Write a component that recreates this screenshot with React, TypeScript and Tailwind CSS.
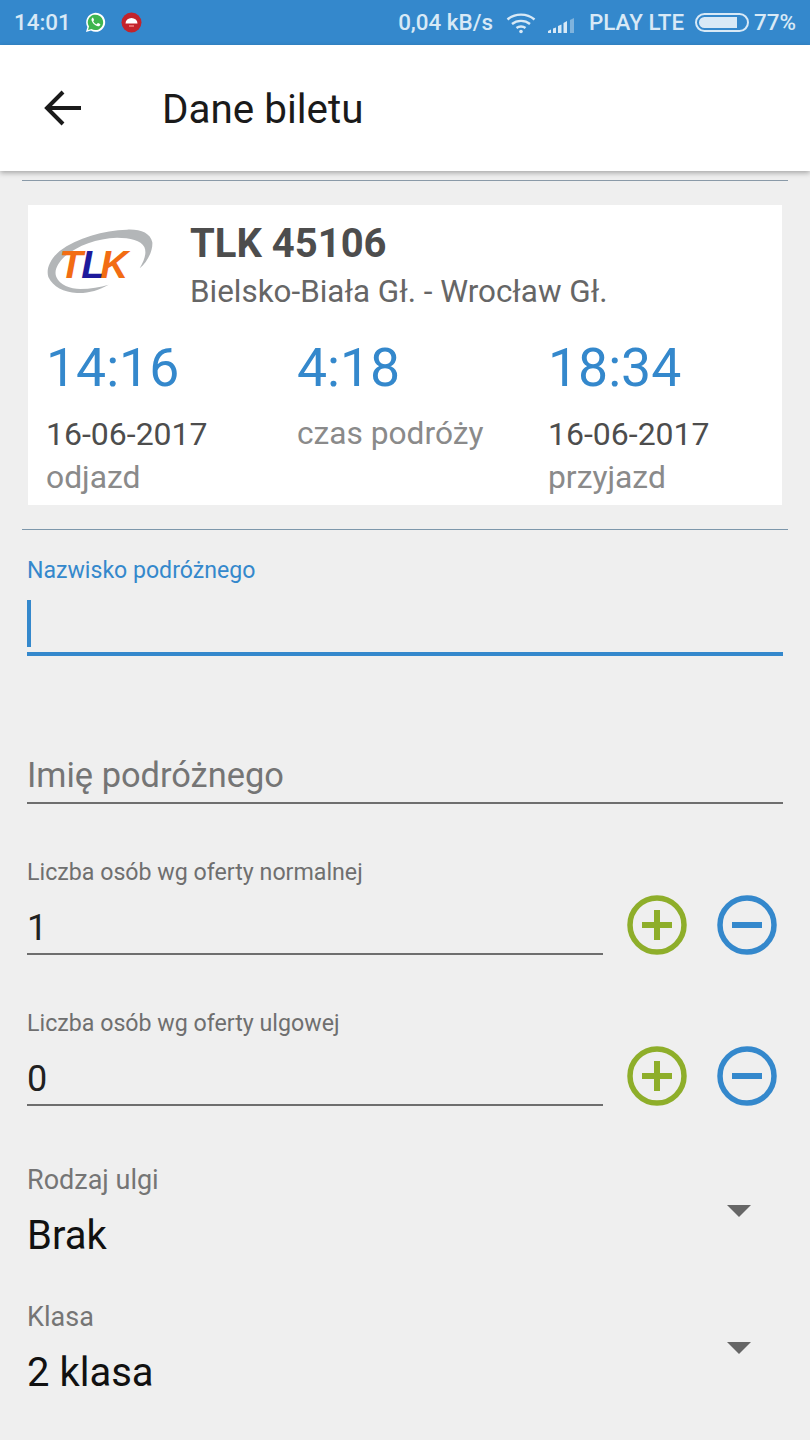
import React from "react";

const Blue = "#3488cc";

function Whatsapp() {
  return (
    <svg width="21" height="21" viewBox="0 0 21 21">
      <path d="M1 20l1.400-5A9.500 9.500 0 1 1 6 18.600z" fill="#fff" />
      <path d="M3 18l1-3.400A7.700 7.700 0 1 1 6.500 17z" fill="#3fb54f" />
      <path d="M7.600 5.800c-.5.3-1.200 1.100-1.100 2.200.2 2.100 3.800 6.200 6.600 6.300 1.200 0 2.100-.9 2.200-1.600 0-.3 0-.5-.2-.6l-2-1c-.2-.1-.4 0-.5.1l-.8 1c-.1.1-.3.2-.5.1-1.200-.5-2.400-1.600-3-2.800-.1-.2 0-.3.1-.4l.6-.8c.1-.2.1-.3 0-.5l-.8-1.900c-.2-.4-.4-.4-.6-.2z" fill="#fff" />
    </svg>
  );
}

function RedIcon() {
  return (
    <svg width="21" height="21" viewBox="0 0 21 21">
      <circle cx="10.500" cy="10.500" r="10" fill="#c3232b" />
      <path d="M4.500 11.500a6 5.500 0 0 1 12 0z" fill="#fff" />
      <rect x="8" y="13" width="5" height="2" fill="#e86a6a" />
    </svg>
  );
}

function Wifi() {
  return (
    <svg width="30" height="22" viewBox="0 0 30 22" fill="none" stroke="#d8e9f6" strokeWidth="2.400">
      <path d="M1.500 7.500C9 1 21 1 28.500 7.500" />
      <path d="M6 12c5-4.200 13-4.200 18 0" />
      <path d="M10.500 16c2.500-2 6.500-2 9 0" />
      <circle cx="15" cy="19.500" r="1.800" fill="#d8e9f6" stroke="none" />
    </svg>
  );
}

function Signal() {
  return (
    <svg className="mt-[4px]" width="27" height="16" viewBox="0 0 27 16">
      <path d="M0 16v-2l3-1.500V16z" fill="#d8e9f6" />
      <path d="M5 16v-4.500l3-1V16z" fill="#d8e9f6" />
      <path d="M10 16V9l3.500-1.500V16z" fill="#d8e9f6" />
      <path d="M15.500 16V6l3.500-2V16z" fill="#d8e9f6" />
      <path d="M22 16V3l4-2V16z" fill="#7fb3dd" />
    </svg>
  );
}

function Battery() {
  return (
    <div className="flex h-[19px] w-[54px] items-center rounded-full border-2 border-[#d8e9f6] p-[2px]">
      <div className="h-full w-[38px] rounded-l-full rounded-r-[3px] bg-[#d8e9f6]" />
    </div>
  );
}

function Logo() {
  return (
    <svg width="106" height="65" viewBox="80 178 318 195">
      <path
        d="M265 345C235 362 200 372 170 370C130 368 98 352 84 322C76 296 92 266 118 244C170 204 250 182 320 180C360 178 390 190 396 218C398 245 380 278 358 296C372 272 380 250 372 232C362 212 330 204 290 204C230 206 170 228 134 260C112 280 100 304 108 322C118 346 150 358 180 358C210 358 240 352 265 345Z"
        fill="#b3b6b8"
      />
      <text y="325" fontFamily="'Liberation Sans', sans-serif" fontStyle="italic" fontWeight="700" fontSize="116">
        <tspan x="117" fill="#f26c13">T</tspan>
        <tspan x="183" fill="#1e1a9c">L</tspan>
        <tspan x="240" fill="#f26c13">K</tspan>
      </text>
    </svg>
  );
}

function RoundButton({ kind }: { kind: "plus" | "minus" }) {
  const color = kind === "plus" ? "#8eae2a" : Blue;
  return (
    <svg width="60" height="60" viewBox="0 0 60 60">
      <circle cx="30" cy="30" r="27" fill="none" stroke={color} strokeWidth="5.500" />
      <rect x="15" y="27" width="30" height="6" fill={color} />
      {kind === "plus" && <rect x="27" y="15" width="6" height="30" fill={color} />}
    </svg>
  );
}

function Counter({ label, value }: { label: string; value: string }) {
  return (
    <div className="flex items-end">
      <div className="w-[576px]">
        <div className="text-[23.200px] leading-[28px] text-[#6f6f6f]">{label}</div>
        <div className="mt-[21px] h-[48px] border-b-2 border-[#6e6e6e] text-[36px] leading-[42px] text-[#212121]">{value}</div>
      </div>
      <div className="ml-[24px] flex gap-[30px]">
        <RoundButton kind="plus" />
        <RoundButton kind="minus" />
      </div>
    </div>
  );
}

function SelectRow({ label, value }: { label: string; value: string }) {
  return (
    <div className="flex items-start justify-between">
      <div>
        <div className="text-[27px] leading-[32px] text-[#757575]">{label}</div>
        <div className="mt-[16px] text-[40px] leading-[48px] text-[#111]">{value}</div>
      </div>
      <div className="mr-[32px] mt-[41px] h-0 w-0 border-x-[12px] border-t-[12px] border-x-transparent border-t-[#666]" />
    </div>
  );
}

export default function App() {
  return (
    <div className="flex h-[1440px] w-[810px] flex-col overflow-hidden bg-[#efefef] font-['Roboto',sans-serif]">
      <div className="flex h-[45px] items-center bg-[#3488cc] pl-[14px] pr-[14px] text-[22.400px] font-medium text-[#d8e9f6]">
        <span>14:01</span>
        <span className="ml-[14px]"><Whatsapp /></span>
        <span className="ml-[15px]"><RedIcon /></span>
        <span className="ml-auto">0,04 kB/s</span>
        <span className="ml-[13px]"><Wifi /></span>
        <span className="ml-[12px]"><Signal /></span>
        <span className="ml-[14px]">PLAY LTE</span>
        <span className="ml-[11px]"><Battery /></span>
        <span className="ml-[5px]">77%</span>
      </div>
      <div className="z-10 flex h-[126px] items-center bg-white shadow-[0_2px_5px_rgba(0,0,0,0.3)]">
        <svg className="ml-[44px]" width="38" height="36" viewBox="0 0 38 36" fill="none" stroke="#1a1a1a" strokeWidth="4">
          <path d="M37 18H4" />
          <path d="M19 2L3 18l16 16" />
        </svg>
        <div className="ml-[80px] mt-[4px] text-[40.400px] text-[#1a1a1a]">Dane biletu</div>
      </div>
      <div className="px-[22px]">
        <div className="mt-[9px] h-px bg-[#8a9aa8]" />
        <div className="mx-[6px] mt-[24px] h-[300px] bg-white pl-[18px]">
          <div className="flex pt-[16px]">
            <div className="w-[144px] pl-[1px] pt-[8px]"><Logo /></div>
            <div>
              <div className="pt-[1px] text-[40px] font-bold leading-[44px] text-[#4d4d4d]">TLK 45106</div>
              <div className="mt-[8px] text-[31.400px] leading-[36px] text-[#666]">Bielsko-Biała Gł. - Wrocław Gł.</div>
            </div>
          </div>
          <div className="mt-[26px] grid grid-cols-[251px_251px_1fr]">
            <div>
              <div className="text-[53.500px] leading-[64px] text-[#3488cc]">14:16</div>
              <div className="mt-[12px] text-[32px] leading-[44px] text-[#4d4d4d]">16-06-2017</div>
              <div className="text-[31.800px] leading-[42px] text-[#8a8a8a]">odjazd</div>
            </div>
            <div>
              <div className="text-[53.500px] leading-[64px] text-[#3488cc]">4:18</div>
              <div className="mt-[12px] text-[31.700px] leading-[44px] text-[#8a8a8a]">czas podróży</div>
            </div>
            <div>
              <div className="text-[53.500px] leading-[64px] text-[#3488cc]">18:34</div>
              <div className="mt-[12px] text-[32px] leading-[44px] text-[#4d4d4d]">16-06-2017</div>
              <div className="text-[31.800px] leading-[42px] text-[#8a8a8a]">przyjazd</div>
            </div>
          </div>
        </div>
        <div className="mt-[24px] h-px bg-[#7d97ab]" />
        <div className="mx-[5px]">
          <div className="mt-[27px] text-[23.100px] leading-[28px] text-[#3488cc]">Nazwisko podróżnego</div>
          <div className="mt-[15px] h-[56px] border-b-4 border-[#3488cc]">
            <div className="h-[47px] w-[4px] bg-[#3488cc]" />
          </div>
          <div className="mt-[99px] h-[49px] border-b-2 border-[#6e6e6e] text-[34.400px] leading-[40px] text-[#757575]">Imię podróżnego</div>
          <div className="mt-[54px]"><Counter label="Liczba osób wg oferty normalnej" value="1" /></div>
          <div className="mt-[54px]"><Counter label="Liczba osób wg oferty ulgowej" value="0" /></div>
          <div className="mt-[58px]"><SelectRow label="Rodzaj ulgi" value="Brak" /></div>
          <div className="mt-[41px]"><SelectRow label="Klasa" value="2 klasa" /></div>
        </div>
      </div>
    </div>
  );
}
